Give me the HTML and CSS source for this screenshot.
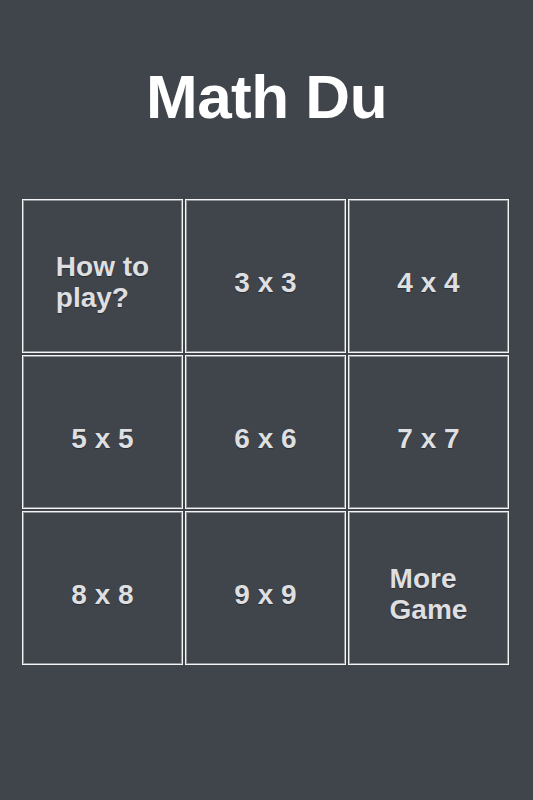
FILE: index.html
```html
<!DOCTYPE html>
<html lang="en">

<head>
  <title>Math Du</title>
  <meta charset="utf-8">
  <meta name="viewport" content="width=device-width, initial-scale=1.0">
  <link rel="stylesheet" href="styles.css">
</head>

<body>
  <div class="container">
    <h1 class="title">Math Du</h1>
    <div class="menu">
      <div class="cell"><span class="label">How to<br>play?</span></div>
      <div class="cell"><span class="label">3 x 3</span></div>
      <div class="cell"><span class="label">4 x 4</span></div>
      <div class="cell"><span class="label">5 x 5</span></div>
      <div class="cell"><span class="label">6 x 6</span></div>
      <div class="cell"><span class="label">7 x 7</span></div>
      <div class="cell"><span class="label">8 x 8</span></div>
      <div class="cell"><span class="label">9 x 9</span></div>
      <div class="cell"><span class="label">More<br>Game</span></div>
    </div>
  </div>
</body>

</html>
```

FILE: styles.css
```css
html,
body {
  height: 100vh;
  padding: 0;
  margin: 0;
}

body {
  background: #40444b;
  color: #dedfe0;
  font: 28px/31px "Liberation Sans", Arial, Helvetica, sans-serif;
}

.container {
  padding-top: 66px;
}

.title {
  margin: 0;
  text-align: center;
  color: #fff;
  font-size: 62px;
  line-height: 1;
  font-weight: bold;
  letter-spacing: -0.5px;
}

.menu {
  display: grid;
  grid-template-columns: repeat(3, 161px);
  grid-auto-rows: 154px;
  gap: 2px;
  margin: 71px 0 0 22px;
}

.cell {
  display: flex;
  align-items: center;
  justify-content: center;
  padding-top: 12px;
  border: 1px solid #f4f4f4;
  box-shadow: inset 0 0 0 1px #8e9195;
  box-sizing: border-box;
  cursor: pointer;
}

.label {
  display: inline-block;
  text-align: left;
  font-weight: bold;
  text-shadow: 0 1px 1px rgba(0, 0, 0, .35);
}
```
